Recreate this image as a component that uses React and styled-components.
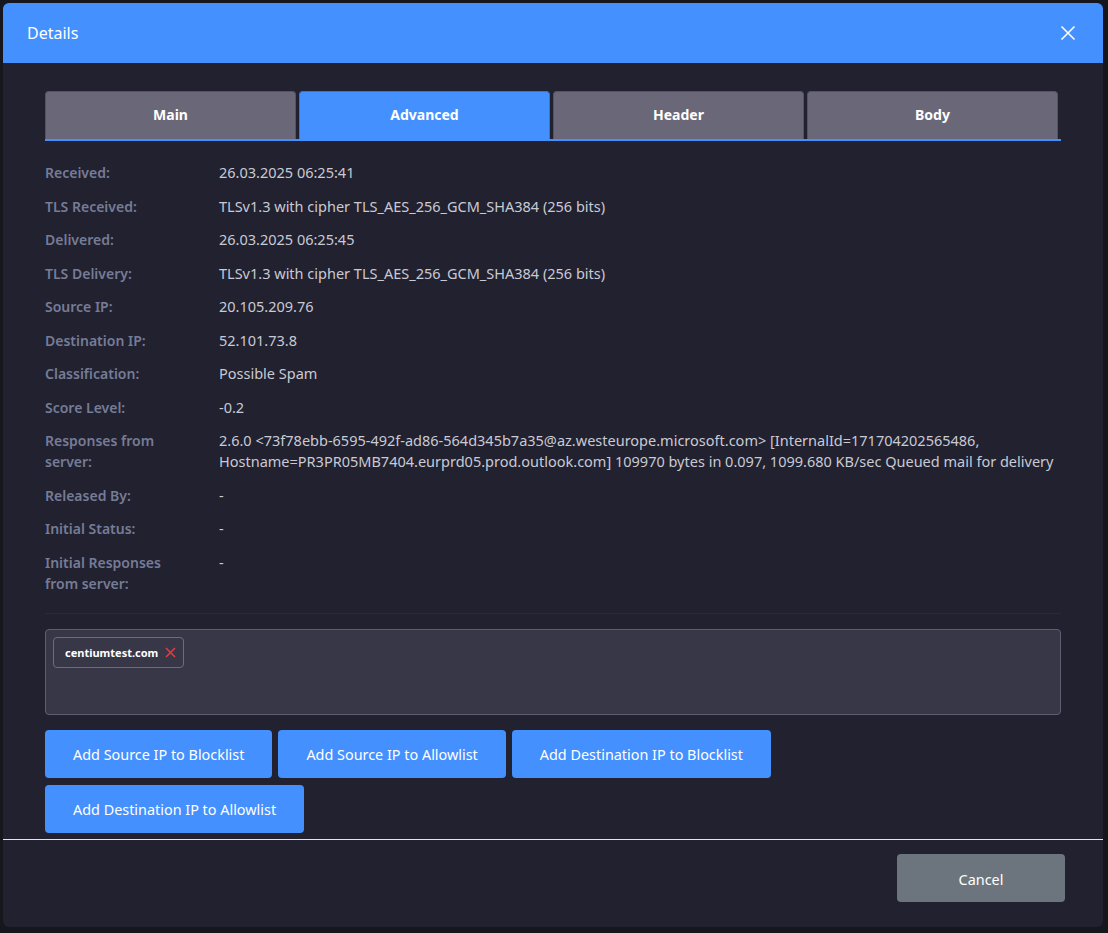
import React, { useState } from "react";
import styled, { createGlobalStyle } from "styled-components";

const GlobalStyle = createGlobalStyle`
  html, body {
    margin: 0;
    padding: 0;
    background: #16171d;
  }
  body {
    font-family: "Noto Sans", "Open Sans", sans-serif;
  }
`;

const Page = styled.div`
  padding: 3px 5px 6px 3px;
  min-height: 933px;
  box-sizing: border-box;
`;

const Modal = styled.div`
  width: 1100px;
  background-color: #212130;
  border-radius: 6px;
  overflow: hidden;
`;

const Header = styled.div`
  height: 60px;
  background-color: #4490ff;
  display: flex;
  align-items: center;
  justify-content: space-between;
  padding: 0 26px 0 24px;
  color: #fff;
  font-size: 16px;
`;

const CloseButton = styled.button`
  background: none;
  border: 0;
  padding: 0;
  width: 18px;
  height: 18px;
  display: flex;
  align-items: center;
  justify-content: center;
  cursor: pointer;
`;

const Body = styled.div`
  padding: 28px 42px 6px 42px;
`;

const Tabs = styled.div`
  display: flex;
  border-bottom: 2px solid #4490ff;
`;

const Tab = styled.button`
  flex: 1;
  height: 48px;
  margin-right: 3px;
  border: 1px solid ${(p) => (p.active ? "#3d74c8" : "#55536a")};
  border-bottom: 0;
  border-radius: 4px 4px 0 0;
  background-color: ${(p) => (p.active ? "#4490ff" : "#6a6878")};
  color: #fff;
  font-family: "Noto Sans", sans-serif;
  font-weight: 700;
  font-size: 14px;
  padding: 0 0 2px;
  cursor: pointer;
`;

const InfoList = styled.div`
  display: grid;
  grid-template-columns: 174px 1fr;
  padding: 15px 0 13px;
  border-bottom: 1px solid #2a2a3a;
`;

const Label = styled.div`
  color: #767c96;
  font-size: 14px;
  font-weight: 600;
  line-height: 21px;
  padding: 6.25px 24px 6.25px 0;
`;

const Value = styled.div`
  color: #c9cad4;
  font-size: 14.5px;
  line-height: 21px;
  padding: 6.25px 0;
`;

const TagBox = styled.div`
  margin-top: 15px;
  height: 86px;
  box-sizing: border-box;
  background-color: #373747;
  border: 1px solid #5e5e72;
  border-radius: 4px;
  padding: 7px;
  display: flex;
  align-items: flex-start;
  gap: 6px;
`;

const Chip = styled.div`
  display: flex;
  align-items: center;
  gap: 7px;
  height: 31px;
  box-sizing: border-box;
  padding: 0 7px 0 11px;
  border: 1px solid #6c6c7e;
  border-radius: 4px;
  color: #fff;
  font-size: 11px;
  font-weight: 700;
`;

const ChipRemove = styled.span`
  display: flex;
  cursor: pointer;
`;

const Actions = styled.div`
  display: flex;
  flex-wrap: wrap;
  gap: 7px 6px;
  margin-top: 15px;
  max-width: 800px;
`;

const Button = styled.button`
  height: 48px;
  padding: 0 ${(p) => p.pad ?? 28}px;
  border: 0;
  border-radius: 4px;
  background-color: ${(p) => (p.secondary ? "#6c757d" : "#4490ff")};
  color: #fff;
  font-family: "Noto Sans", sans-serif;
  font-size: 14.4px;
  cursor: pointer;
`;

const CancelButton = styled(Button)`
  width: 168px;
  padding-top: 2px;
`;

const Footer = styled.div`
  border-top: 1px solid #e4e4e8;
  display: flex;
  justify-content: flex-end;
  padding: 14px 38px 25px;
`;

const rows = [
  ["Received:", "26.03.2025 06:25:41"],
  ["TLS Received:", "TLSv1.3 with cipher TLS_AES_256_GCM_SHA384 (256 bits)"],
  ["Delivered:", "26.03.2025 06:25:45"],
  ["TLS Delivery:", "TLSv1.3 with cipher TLS_AES_256_GCM_SHA384 (256 bits)"],
  ["Source IP:", "20.105.209.76"],
  ["Destination IP:", "52.101.73.8"],
  ["Classification:", "Possible Spam"],
  ["Score Level:", "-0.2"],
  [
    "Responses from server:",
    "2.6.0 <73f78ebb-6595-492f-ad86-564d345b7a35@az.westeurope.microsoft.com> [InternalId=171704202565486, Hostname=PR3PR05MB7404.eurprd05.prod.outlook.com] 109970 bytes in 0.097, 1099.680 KB/sec Queued mail for delivery",
  ],
  ["Released By:", "-"],
  ["Initial Status:", "-"],
  ["Initial Responses from server:", "-"],
];

const tabs = ["Main", "Advanced", "Header", "Body"];

export default function App() {
  const [active, setActive] = useState("Advanced");
  return (
    <>
      <GlobalStyle />
      <Page>
        <Modal>
          <Header>
            <span>Details</span>
            <CloseButton aria-label="close">
              <svg width="16" height="16" viewBox="0 0 16 16">
                <path d="M1.5 1.5 L14.5 14.5 M14.5 1.5 L1.5 14.5" stroke="#fff" strokeWidth="1.6" />
              </svg>
            </CloseButton>
          </Header>
          <Body>
            <Tabs>
              {tabs.map((t) => (
                <Tab key={t} active={active === t} onClick={() => setActive(t)}>
                  {t}
                </Tab>
              ))}
            </Tabs>
            <InfoList>
              {rows.map(([l, v]) => (
                <React.Fragment key={l}>
                  <Label>{l}</Label>
                  <Value>{v}</Value>
                </React.Fragment>
              ))}
            </InfoList>
            <TagBox>
              <Chip>
                centiumtest.com
                <ChipRemove>
                  <svg width="11" height="11" viewBox="0 0 11 11">
                    <path d="M1 1 L10 10 M10 1 L1 10" stroke="#e5393b" strokeWidth="1.7" />
                  </svg>
                </ChipRemove>
              </Chip>
            </TagBox>
            <Actions>
              <Button>Add Source IP to Blocklist</Button>
              <Button>Add Source IP to Allowlist</Button>
              <Button>Add Destination IP to Blocklist</Button>
              <Button>Add Destination IP to Allowlist</Button>
            </Actions>
          </Body>
          <Footer>
            <CancelButton secondary pad={0}>
              Cancel
            </CancelButton>
          </Footer>
        </Modal>
      </Page>
    </>
  );
}
